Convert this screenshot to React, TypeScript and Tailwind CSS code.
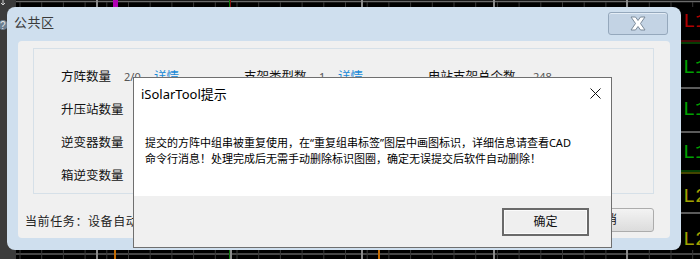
import React from 'react';

const cjk = "font-['Noto_Sans','Noto_Sans_CJK_SC',sans-serif]";

// drawing behind the windows: black CAD canvas with grid ticks and layer labels
const CadBackdrop = () => {
  const ticks = Array.from({ length: 32 }, (_, i) => 20 + i * 21.7);
  return (
    <svg className="absolute inset-0" width={700} height={259} viewBox="0 0 700 259">
      <rect width="700" height="259" fill="#000" />
      <rect x="0" y="0" width="16" height="259" fill="#3b3b3b" />
      <path d="M3 0 L3 5 M1 3 L3 5 L5 3" stroke="#cfcfcf" strokeWidth="1" fill="none" />
      <circle cx="3" cy="25" r="5" fill="#6b7f92" />
      <text x="0" y="29" fontSize="10" fill="#e6e6e6" fontFamily="Liberation Sans, sans-serif">?</text>

      {/* top strip */}
      <line x1="16" y1="1.5" x2="700" y2="1.5" stroke="#6a6a6a" strokeWidth="1.5" />
      {ticks.map((x) => (
        <line key={'t' + x} x1={x} y1="2" x2={x} y2="7" stroke="#3a3a3a" />
      ))}
      <rect x="96" y="0" width="2" height="8" fill="#8a8a8a" />
      <rect x="113" y="0" width="5" height="9" fill="#b000b4" />
      <rect x="229" y="0" width="1" height="8" fill="#0a7a0a" />
      <rect x="230" y="0" width="1" height="8" fill="#8b1010" />
      <rect x="361" y="0" width="2" height="8" fill="#8a8a8a" />
      <rect x="493" y="0" width="2" height="8" fill="#8a8a8a" />
      <rect x="626" y="0" width="2" height="8" fill="#8a8a8a" />

      {/* bottom strip */}
      <line x1="16" y1="254" x2="700" y2="254" stroke="#5e5e5e" strokeWidth="1.5" />
      {ticks.map((x) => (
        <line key={'b' + x} x1={x} y1="250" x2={x} y2="259" stroke="#3a3a3a" />
      ))}
      <rect x="96" y="250" width="2" height="9" fill="#8a8a8a" />
      <rect x="114" y="250" width="2" height="9" fill="#c46a00" />
      <rect x="229" y="250" width="1" height="9" fill="#0a7a0a" />
      <rect x="230" y="250" width="2" height="9" fill="#8a8a8a" />
      <rect x="361" y="250" width="2" height="9" fill="#8a8a8a" />
      <rect x="378" y="250" width="2" height="9" fill="#c46a00" />
      <rect x="493" y="250" width="2" height="9" fill="#8a8a8a" />
      <rect x="626" y="250" width="2" height="9" fill="#8a8a8a" />

      {/* right edge, layer text running off the canvas */}
      <line x1="680" y1="41" x2="700" y2="41" stroke="#8b1010" />
      <line x1="680" y1="43" x2="700" y2="43" stroke="#0a7a0a" />
      <line x1="680" y1="88" x2="700" y2="88" stroke="#7a7a7a" strokeWidth="1.5" />
      <line x1="680" y1="132" x2="700" y2="132" stroke="#7a7a7a" strokeWidth="1.5" />
      <line x1="680" y1="171" x2="700" y2="171" stroke="#0a7a0a" />
      <line x1="680" y1="173" x2="700" y2="173" stroke="#8a8a00" />
      <line x1="680" y1="213" x2="700" y2="213" stroke="#7a7a7a" strokeWidth="1.5" />
      <g fontFamily="Liberation Mono, monospace" fontSize="20">
        <text x="683" y="27" fill="#b00000">L1</text>
        <text x="683" y="73" fill="#00a000">L1</text>
        <text x="683" y="115" fill="#00a000">L1</text>
        <text x="683" y="158" fill="#00a000">L1</text>
        <text x="683" y="202" fill="#a0a000">L2</text>
        <text x="683" y="245" fill="#a0a000">L2</text>
      </g>
    </svg>
  );
};

const BigCloseIcon = () => (
  <svg width="20" height="15" viewBox="0 0 20 15">
    <path
      d="M3 1 H7.5 L10 4.5 L12.5 1 H17 L12.5 7.5 L17 14 H12.5 L10 10.5 L7.5 14 H3 L7.5 7.5 Z"
      fill="#ffffff"
      stroke="#7b8a99"
      strokeWidth="1"
      strokeLinejoin="round"
    />
  </svg>
);

const Row = ({ children }: { children: React.ReactNode }) => (
  <div className="flex h-[20px] items-center pl-[27px]">{children}</div>
);

const Label = ({ w, children }: { w: string; children: React.ReactNode }) => (
  <span className={`${w} shrink-0 text-[12.5px] text-[#111]`}>{children}</span>
);

export default function App() {
  return (
    <div className={`relative h-[259px] w-[700px] overflow-hidden bg-black ${cjk}`}>
      <CadBackdrop />

      {/* 公共区 window */}
      <div className="absolute left-[7px] top-[7px] flex h-[243px] w-[674px] flex-col rounded-[8px] bg-[#cfdfee]">
        <div className="flex h-[34px] justify-between pl-[7px] pr-[13px]">
          <span className="self-center pb-[2px] text-[13px] tracking-[0.5px] text-[#3a3a3a]">公共区</span>
          <div className="mt-[5px] flex h-[23px] w-[60px] items-center justify-center rounded-[3px] border border-[#95a8bc] bg-[#c3d3e4] shadow-[inset_0_1px_0_#e4edf6]">
            <BigCloseIcon />
          </div>
        </div>

        <div className="mx-[11px] flex h-[197px] flex-col rounded-[4px] bg-[#f0f0f0] pl-[15px] pr-[16px] pt-[7px]">
          <div className="flex h-[146px] flex-col gap-[13px] border border-[#d6e0e8] pt-[18px]">
            <Row>
              <Label w="w-[63px]">方阵数量</Label>
              <span className="w-[30px] shrink-0 text-[11px] text-[#555]">2/0</span>
              <span className="w-[90px] shrink-0 text-[12.5px] text-[#1a8ad8]">详情</span>
              <Label w="w-[75px]">支架类型数</Label>
              <span className="w-[19px] shrink-0 text-[11px] text-[#555]">1</span>
              <span className="w-[90px] shrink-0 text-[12.5px] text-[#1a8ad8]">详情</span>
              <Label w="w-[105px]">电站支架总个数</Label>
              <span className="text-[11px] text-[#555]">248</span>
            </Row>
            <Row>
              <Label w="w-[80px]">升压站数量</Label>
            </Row>
            <Row>
              <Label w="w-[80px]">逆变器数量</Label>
            </Row>
            <Row>
              <Label w="w-[80px]">箱逆变数量</Label>
            </Row>
          </div>

          <div className="mt-[14px] flex h-[24px] items-start justify-between">
            <span className="-ml-[8px] mt-[7px] text-[12px] leading-[14px] tracking-[0.6px] text-[#222]">
              当前任务：设备自动匹配中
            </span>
            <div className="flex h-[24px] w-[98px] items-center justify-center rounded-[3px] border border-[#acacac] bg-gradient-to-b from-[#f3f3f3] to-[#dcdcdc] text-[12px] text-[#111]">
              取消
            </div>
          </div>
        </div>
      </div>

      {/* iSolarTool提示 dialog */}
      <div className="absolute left-[133px] top-[77px] flex h-[171px] w-[479px] flex-col border border-[#6f6f6f] bg-white">
        <div className="flex h-[118px] flex-col">
          <div className="flex items-start justify-between pl-[7px] pr-[10px] pt-[6px]">
            <span className="text-[13px] leading-[20px] text-black">iSolarTool提示</span>
            <svg className="mt-[4px]" width="11" height="11" viewBox="0 0 11 11">
              <path d="M0.5 0.5 L10.5 10.5 M10.5 0.5 L0.5 10.5" stroke="#111" strokeWidth="1" />
            </svg>
          </div>
          <div className="mt-[31px] pl-[11px] text-[11px] leading-[16px] text-black">
            <p>提交的方阵中组串被重复使用，在“重复组串标签”图层中画图标识，详细信息请查看CAD</p>
            <p>命令行消息！处理完成后无需手动删除标识图圈，确定无误提交后软件自动删除！</p>
          </div>
        </div>
        <div className="flex flex-1 items-start justify-end bg-[#f0f0f0] pr-[22px] pt-[12px]">
          <div className="flex h-[28px] w-[87px] items-center justify-center border-2 border-[#6a6a6a] bg-[#efefef] text-[12px] text-[#111] shadow-[inset_0_0_0_1px_#fbfbfb]">
            确定
          </div>
        </div>
      </div>
    </div>
  );
}
